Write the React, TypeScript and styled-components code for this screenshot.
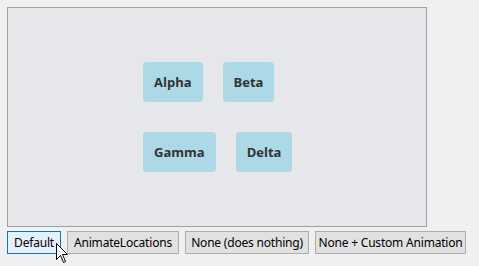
import React from 'react';
import styled, {createGlobalStyle} from 'styled-components';

const GlobalStyle = createGlobalStyle`
  html, body {
    margin: 0;
    padding: 0;
    background: #f0f0f0;
  }
`;

const Window = styled.div`
  width: 479px;
  height: 266px;
  box-sizing: border-box;
  padding: 7px;
  display: flex;
  flex-direction: column;
  gap: 4px;
  font-family: 'Segoe UI', 'Open Sans', 'Noto Sans', sans-serif;
  position: relative;
`;

const Stage = styled.div`
  width: 420px;
  height: 220px;
  box-sizing: border-box;
  border: 1px solid #a0a0a0;
  background: #e5e7eb;
  display: flex;
  align-items: center;
  justify-content: center;
`;

const Wrap = styled.div`
  width: 170px;
  margin-left: 2px;
  display: flex;
  flex-wrap: wrap;
  justify-content: flex-start;
`;

const Tile = styled.div`
  margin: 15px 10px;
  height: 40px;
  box-sizing: border-box;
  padding: 0 11px;
  display: flex;
  align-items: center;
  background: #add8e6;
  border-radius: 4px;
  color: #333333;
  font-family: 'Open Sans', sans-serif;
  font-weight: 700;
  font-size: 13px;
`;

const Toolbar = styled.div`
  display: flex;
  gap: 6px;
`;

const Button = styled.button<{$active?: boolean; $width: number}>`
  flex-shrink: 0;
  white-space: nowrap;
  width: ${(p) => p.$width}px;
  height: 23px;
  box-sizing: border-box;
  padding: 0;
  border: 1px solid ${(p) => (p.$active ? '#0078d7' : '#adadad')};
  background: ${(p) => (p.$active ? '#e5f1fb' : '#e1e1e1')};
  color: #000;
  font-family: 'Segoe UI', 'Noto Sans', sans-serif;
  font-size: 12px;
  letter-spacing: -0.2px;
  line-height: 1;
  border-radius: 0;
`;

const Cursor = styled.svg`
  position: absolute;
  left: 56px;
  top: 243px;
`;

const tiles = ['Alpha', 'Beta', 'Gamma', 'Delta'];
const buttons = [
  {label: 'Default', width: 54},
  {label: 'AnimateLocations', width: 112},
  {label: 'None (does nothing)', width: 124},
  {label: 'None + Custom Animation', width: 151},
];

const App: React.FC = () => {
  return (
    <>
      <GlobalStyle />
      <Window>
        <Stage>
          <Wrap>
            {tiles.map((t) => (
              <Tile key={t}>{t}</Tile>
            ))}
          </Wrap>
        </Stage>
        <Toolbar>
          {buttons.map((b, i) => (
            <Button key={b.label} $active={i === 0} $width={b.width}>
              {b.label}
            </Button>
          ))}
        </Toolbar>
        <Cursor width="13" height="21" viewBox="0 0 13 21">
          <path d="M0.5 0.5 L0.5 16.5 L4.5 12.5 L7.5 19.5 L9.5 18.5 L6.5 11.5 L11.5 11.5 Z" fill="#fff" stroke="#000" strokeWidth="1" />
        </Cursor>
      </Window>
    </>
  );
};

export default App;
